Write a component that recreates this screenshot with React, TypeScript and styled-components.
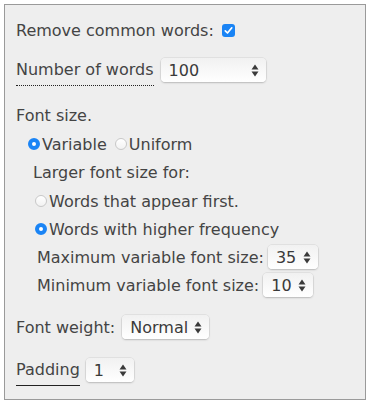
import styled, { createGlobalStyle } from 'styled-components';

const GlobalStyle = createGlobalStyle`
  html, body {
    margin: 0;
    padding: 0;
    background: #ffffff;
  }
  body {
    font-family: 'DejaVu Sans', Verdana, sans-serif;
    color: #444444;
  }
`;

function Arrows() {
  return (
    <svg width="8" height="13" viewBox="0 0 8 13">
      <path d="M4 0.5 L7.5 5.5 L0.5 5.5 Z" fill="#3a3a3a" />
      <path d="M4 12.5 L7.5 7.5 L0.5 7.5 Z" fill="#3a3a3a" />
    </svg>
  );
}

function Check() {
  return (
    <svg width="9" height="9" viewBox="0 0 9 9">
      <path d="M1.3 4.8 L3.5 7 L7.8 1.8" fill="none" stroke="#fff" strokeWidth="1.7" strokeLinecap="round" strokeLinejoin="round" />
    </svg>
  );
}

export default function App() {
  return (
    <>
      <GlobalStyle />
      <Panel>
        <Row>
          Remove common words:
          <Checkbox>
            <Check />
          </Checkbox>
        </Row>
        <Row $top={16}>
          <Label $line="dotted">Number of words</Label>
          <Select $width={105} $gap={7}>
            <span>100</span>
            <Arrows />
          </Select>
        </Row>
        <Row $top={21}>Font size.</Row>
        <Options $indent={12} $top={5}>
          <Radio $checked />
          Variable
          <Radio />
          Uniform
        </Options>
        <Row $indent={17} $top={4}>Larger font size for:</Row>
        <Options $indent={19} $top={5}>
          <Radio />
          Words that appear first.
        </Options>
        <Options $indent={19} $top={4}>
          <Radio $checked />
          Words with higher frequency
        </Options>
        <Row $indent={21} $top={4}>
          Maximum variable font size:
          <Select $width={50} $gap={4}>
            <span>35</span>
            <Arrows />
          </Select>
        </Row>
        <Row $indent={21} $top={4}>
          Minimum variable font size:
          <Select $width={50} $gap={4}>
            <span>10</span>
            <Arrows />
          </Select>
        </Row>
        <Row $top={18}>
          Font weight:
          <Select $width={87} $gap={7}>
            <span>Normal</span>
            <Arrows />
          </Select>
        </Row>
        <Row $top={19}>
          <Label $line="solid">Padding</Label>
          <Select $width={48} $gap={6}>
            <span>1</span>
            <Arrows />
          </Select>
        </Row>
      </Panel>
    </>
  );
}

const Panel = styled.div`
  margin: 4px;
  width: 362px;
  height: 396px;
  box-sizing: border-box;
  border: 1px solid #9a9a9a;
  background: #eeeeee;
  padding: 13px 11px 12px 11px;
  font-size: 16px;
`;

const Row = styled.div<{ $top?: number; $indent?: number }>`
  display: flex;
  align-items: center;
  height: 24px;
  margin-top: ${(p) => p.$top ?? 0}px;
  padding-left: ${(p) => p.$indent ?? 0}px;
  white-space: nowrap;
`;

const Options = styled(Row)`
  gap: 1px;
`;

const Label = styled.span<{ $line: 'dotted' | 'solid' }>`
  display: inline-block;
  align-self: flex-start;
  line-height: 24px;
  height: 24px;
  padding-bottom: 3px;
  border-bottom: 1px ${(p) => p.$line} #222;
`;

const Checkbox = styled.span`
  display: inline-flex;
  align-items: center;
  justify-content: center;
  width: 13px;
  height: 13px;
  margin-left: 8px;
  border-radius: 3px;
  background: #1a84f5;
`;

const Radio = styled.span<{ $checked?: boolean }>`
  display: inline-block;
  box-sizing: border-box;
  width: 12px;
  height: 12px;
  border-radius: 50%;
  margin-left: 7px;
  margin-right: 1px;
  ${(p) =>
    p.$checked
      ? `border: 4px solid #1a84f5; background: #fff;`
      : `border: 1px solid #c8c8c8; background: linear-gradient(#fff, #f2f2f2);`}
  &:first-child {
    margin-left: 0;
  }
`;

const Select = styled.span<{ $width: number; $gap?: number }>`
  display: inline-flex;
  align-items: center;
  justify-content: space-between;
  box-sizing: border-box;
  width: ${(p) => p.$width}px;
  height: 24px;
  margin-left: ${(p) => p.$gap ?? 6}px;
  padding: 0 7px 0 8px;
  border-radius: 4px;
  background: linear-gradient(#f1f1f1, #ffffff);
  box-shadow: 0 0 0 0.5px rgba(0, 0, 0, 0.1), 0 1px 2px rgba(0, 0, 0, 0.18);
  color: #3a3a3a;
`;
